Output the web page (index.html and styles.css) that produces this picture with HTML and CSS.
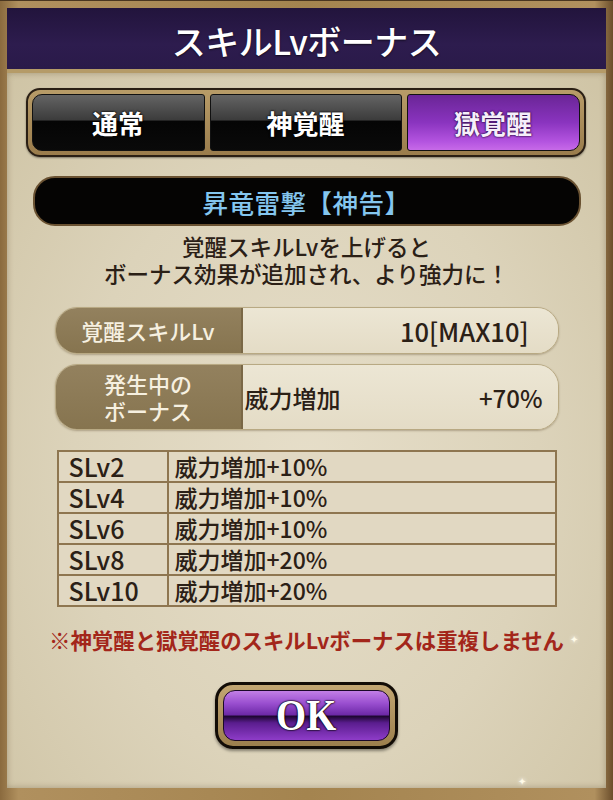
FILE: index.html
```html
<!DOCTYPE html>
<html lang="ja">
<head>
    <meta charset="UTF-8">
    <meta name="viewport" content="width=device-width, initial-scale=1.0">
    <title>スキルLvボーナス</title>
    <link rel="stylesheet" href="styles.css">
</head>
<body>
    <div class="dialog">
        <div class="header">
            <h1>スキルLvボーナス</h1>
        </div>
        <div class="panel">
            <div class="tabs">
                <button class="tab tab-first">通常</button>
                <button class="tab">神覚醒</button>
                <button class="tab tab-last active">獄覚醒</button>
            </div>

            <div class="skill-name">昇竜雷撃【神告】</div>

            <p class="desc">覚醒スキルLvを上げると<br>ボーナス効果が追加され、より強力に！</p>

            <div class="info-row">
                <div class="info-label">覚醒スキルLv</div>
                <div class="info-value level">
                    <span class="value-right">10[MAX10]</span>
                </div>
            </div>
            <div class="info-row tall">
                <div class="info-label">発生中の<br>ボーナス</div>
                <div class="info-value">
                    <span>威力増加</span>
                    <span class="value-right">+70%</span>
                </div>
            </div>

            <table class="bonus-table">
                <tr><td class="lv">SLv2</td><td>威力増加+10%</td></tr>
                <tr><td class="lv">SLv4</td><td>威力増加+10%</td></tr>
                <tr><td class="lv">SLv6</td><td>威力増加+10%</td></tr>
                <tr><td class="lv">SLv8</td><td>威力増加+20%</td></tr>
                <tr><td class="lv">SLv10</td><td>威力増加+20%</td></tr>
            </table>

            <p class="note">※神覚醒と獄覚醒のスキルLvボーナスは重複しません</p>

            <div class="ok-wrap">
                <button class="ok-btn"><span>OK</span></button>
            </div>

            <span class="sparkle sparkle-1">✦</span>
            <span class="sparkle sparkle-2">✦</span>
        </div>
    </div>
</body>
</html>
```

FILE: styles.css
```css
body {
    margin: 0;
    background-color: #3a2a1a;
    font-family: "Noto Sans CJK JP", "Noto Sans", sans-serif;
}
.dialog {
    width: 613px;
    height: 800px;
    box-sizing: border-box;
    padding: 7px 7px 12px 7px;
    background: linear-gradient(90deg, #8a6a3e, #b0905e 3%, #a4844f 50%, #b0905e 97%, #6b4e2c);
    border-top: 1px solid #4a3620;
    display: flex;
    flex-direction: column;
}
.header {
    height: 61px;
    background: linear-gradient(180deg, #22143c, #2d1c4e 60%, #2a1a49);
    border-bottom: 4px solid #b59b68;
    display: flex;
    align-items: center;
    justify-content: center;
}
.header h1 {
    margin: 0;
    padding-top: 3px;
    color: #fff;
    font-size: 34px;
    font-weight: 500;
    letter-spacing: -0.5px;
    text-shadow: 0 1px 2px rgba(0,0,0,0.6);
}
.panel {
    position: relative;
    flex: 1;
    background: radial-gradient(ellipse at 50% 55%, #e6dec9 0%, #dcd3ba 55%, #cfc4a5 100%);
    box-shadow: inset 0 0 6px rgba(80,60,30,0.35);
    display: flex;
    flex-direction: column;
    align-items: center;
}

/* tabs */
.tabs {
    margin-top: 15px;
    margin-left: -2px;
    display: grid;
    grid-template-columns: 173px 192px 173px;
    gap: 5px;
    padding: 4px;
    background: linear-gradient(180deg, #b89c68, #9a7c4c);
    border: 2px solid #2a1f14;
    border-radius: 14px;
    box-shadow: 0 1px 2px rgba(0,0,0,0.4);
}
.tab {
    height: 57px;
    padding: 0;
    border: 1px solid #111;
    border-radius: 3px;
    background: linear-gradient(180deg, #646464 0%, #3c3c3c 45%, #050505 48%, #0a0a0a 100%);
    color: #fff;
    font-family: inherit;
    font-size: 26px;
    font-weight: 700;
    text-shadow: 0 0 2px #000, 0 0 2px #000;
    cursor: pointer;
}
.tab-first {
    border-radius: 10px 3px 3px 10px;
}
.tab-last {
    border-radius: 3px 10px 10px 3px;
}
.tab.active {
    background: linear-gradient(180deg, #6a2596 0%, #8a34bf 50%, #b454e0 85%, #c76ae8 100%);
    color: #f6eefa;
    text-shadow: 0 0 2px #2a0a40, 0 0 2px #2a0a40;
}

/* skill name bar */
.skill-name {
    margin-top: 19px;
    width: 548px;
    height: 50px;
    box-sizing: border-box;
    background: #050403;
    border: 2px solid #6a5232;
    border-radius: 22px;
    color: #84c6ef;
    font-size: 25.5px;
    font-weight: 500;
    display: flex;
    align-items: center;
    justify-content: center;
    letter-spacing: 0.5px;
}

.desc {
    margin: 7px 0 0 0;
    text-align: center;
    font-size: 22.5px;
    line-height: 27px;
    font-weight: 500;
    color: #2b2016;
}

/* info rows */
.info-row {
    margin-top: 20px;
    width: 502px;
    height: 45px;
    display: flex;
    border-radius: 22px;
    overflow: hidden;
    border: 1px solid #b8a983;
    box-shadow: 0 1px 2px rgba(90,70,40,0.35);
}
.info-row.tall {
    margin-top: 10px;
    height: 64px;
}
.info-label {
    width: 185px;
    flex-shrink: 0;
    background: linear-gradient(180deg, #93815e, #86744f);
    color: #f6f0e0;
    font-size: 22px;
    line-height: 27px;
    font-weight: 500;
    display: flex;
    align-items: center;
    justify-content: center;
    text-align: center;
    border-right: 2px solid #7a6846;
}
.info-value {
    flex: 1;
    background: linear-gradient(180deg, #ece6d4, #e4dcc6);
    display: flex;
    align-items: center;
    padding: 0 15px 0 2px;
    color: #2b2016;
    font-size: 24px;
    font-weight: 500;
}
.value-right {
    margin-left: auto;
}
.info-value.level {
    padding-right: 29px;
    font-size: 25.5px;
}

/* bonus table */
.bonus-table {
    margin-top: 20px;
    width: 500px;
    border-collapse: collapse;
    background: #e1d8c2;
    border: 2px solid #8e7650;
}
.bonus-table td {
    height: 29px;
    padding: 0 0 0 6px;
    border: 2px solid #8e7650;
    color: #2b2016;
    font-size: 23px;
    line-height: 29px;
    font-weight: 500;
}
.bonus-table td.lv {
    width: 98px;
    padding-left: 10px;
    font-size: 25px;
}

.note {
    margin: 19px 0 0 0;
    color: #a3261a;
    font-size: 21.4px;
    line-height: 27px;
    font-weight: 700;
}

/* OK button */
.ok-wrap {
    margin-top: 29px;
    padding: 5px;
    background: linear-gradient(180deg, #c2a672, #9c7f4d);
    border: 3px solid #120c06;
    border-radius: 18px;
    box-shadow: 0 2px 3px rgba(0,0,0,0.4);
}
.ok-btn {
    display: block;
    width: 167px;
    height: 51px;
    padding: 0;
    border: 1px solid #1a0828;
    border-radius: 12px;
    background: linear-gradient(180deg, #c27fe6 0%, #9a4fd0 25%, #6e2aa8 48%, #1f0733 52%, #5a1d8e 65%, #8e3cc8 100%);
    cursor: pointer;
}
.ok-btn span {
    display: inline-block;
    color: #fff;
    font-family: "Liberation Serif", "DejaVu Serif", serif;
    font-size: 44px;
    font-weight: 700;
    line-height: 49px;
    transform: scaleX(0.88);
    text-shadow: 0 0 2px #000, 0 0 2px #000, 0 0 1px #000;
}

.sparkle {
    position: absolute;
    color: #fffbe8;
    font-size: 10px;
    text-shadow: 0 0 4px #fff;
}
.sparkle-1 {
    right: 28px;
    top: 558px;
}
.sparkle-2 {
    right: 80px;
    bottom: 0;
}
```
